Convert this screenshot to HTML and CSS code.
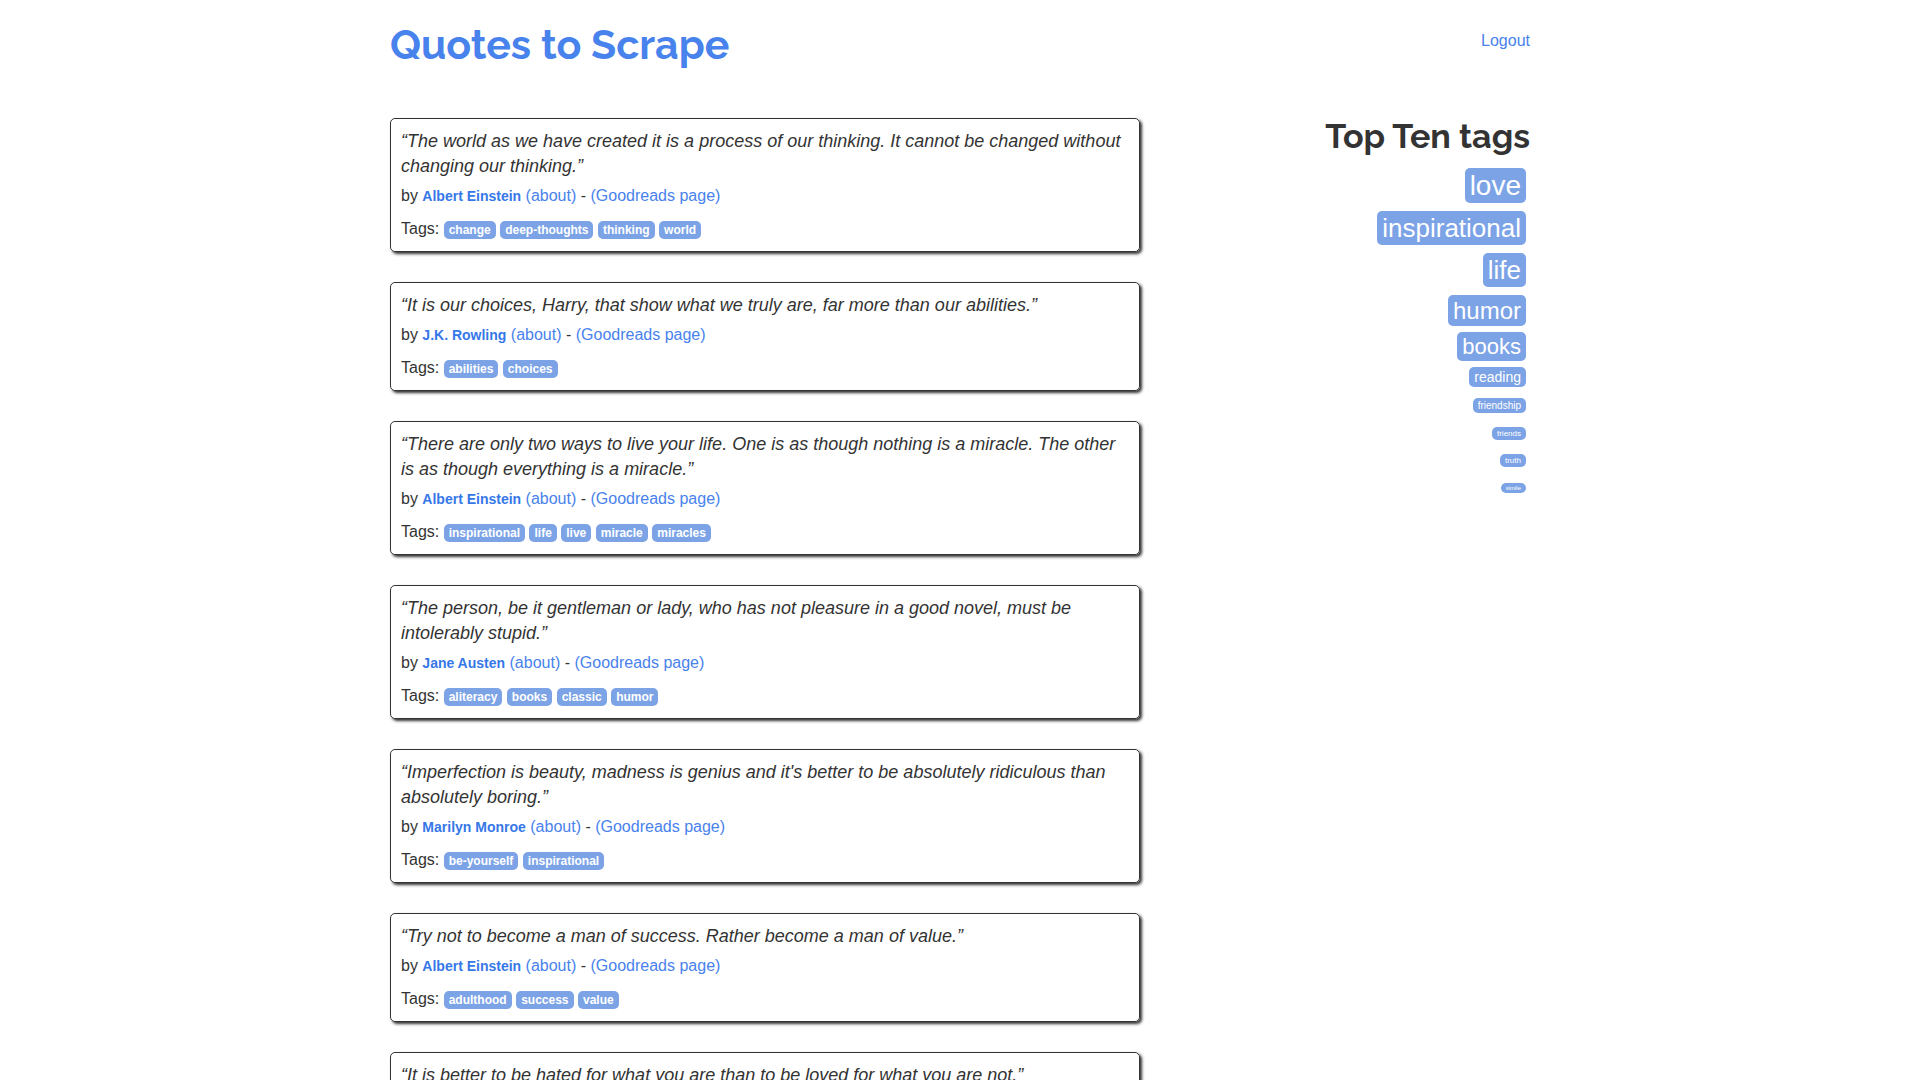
FILE: index.html
```html
<!DOCTYPE html>
<html lang="en">
<head>
<meta charset="utf-8">
<title>Quotes to Scrape</title>
<link rel="stylesheet" href="styles.css">
</head>
<body>
<div class="container">
<header class="header">
<h1><a href="/">Quotes to Scrape</a></h1>
<a class="logout" href="/logout">Logout</a>
</header>
<div class="columns">
<main class="quotes">
<article class="quote">
<p class="text">“The world as we have created it is a process of our thinking. It cannot be changed without changing our thinking.”</p>
<p class="by">by <small class="author">Albert Einstein</small> <a href="/author/Albert-Einstein">(about)</a> - <a href="/goodreads">(Goodreads page)</a></p>
<div class="tags">Tags: <a class="tag" href="/tag/change">change</a> <a class="tag" href="/tag/deep-thoughts">deep-thoughts</a> <a class="tag" href="/tag/thinking">thinking</a> <a class="tag" href="/tag/world">world</a></div>
</article>
<article class="quote">
<p class="text">“It is our choices, Harry, that show what we truly are, far more than our abilities.”</p>
<p class="by">by <small class="author">J.K. Rowling</small> <a href="/author/J-K-Rowling">(about)</a> - <a href="/goodreads">(Goodreads page)</a></p>
<div class="tags">Tags: <a class="tag" href="/tag/abilities">abilities</a> <a class="tag" href="/tag/choices">choices</a></div>
</article>
<article class="quote">
<p class="text">“There are only two ways to live your life. One is as though nothing is a miracle. The other is as though everything is a miracle.”</p>
<p class="by">by <small class="author">Albert Einstein</small> <a href="/author/Albert-Einstein">(about)</a> - <a href="/goodreads">(Goodreads page)</a></p>
<div class="tags">Tags: <a class="tag" href="/tag/inspirational">inspirational</a> <a class="tag" href="/tag/life">life</a> <a class="tag" href="/tag/live">live</a> <a class="tag" href="/tag/miracle">miracle</a> <a class="tag" href="/tag/miracles">miracles</a></div>
</article>
<article class="quote">
<p class="text">“The person, be it gentleman or lady, who has not pleasure in a good novel, must be intolerably stupid.”</p>
<p class="by">by <small class="author">Jane Austen</small> <a href="/author/Jane-Austen">(about)</a> - <a href="/goodreads">(Goodreads page)</a></p>
<div class="tags">Tags: <a class="tag" href="/tag/aliteracy">aliteracy</a> <a class="tag" href="/tag/books">books</a> <a class="tag" href="/tag/classic">classic</a> <a class="tag" href="/tag/humor">humor</a></div>
</article>
<article class="quote">
<p class="text">“Imperfection is beauty, madness is genius and it's better to be absolutely ridiculous than absolutely boring.”</p>
<p class="by">by <small class="author">Marilyn Monroe</small> <a href="/author/Marilyn-Monroe">(about)</a> - <a href="/goodreads">(Goodreads page)</a></p>
<div class="tags">Tags: <a class="tag" href="/tag/be-yourself">be-yourself</a> <a class="tag" href="/tag/inspirational">inspirational</a></div>
</article>
<article class="quote">
<p class="text">“Try not to become a man of success. Rather become a man of value.”</p>
<p class="by">by <small class="author">Albert Einstein</small> <a href="/author/Albert-Einstein">(about)</a> - <a href="/goodreads">(Goodreads page)</a></p>
<div class="tags">Tags: <a class="tag" href="/tag/adulthood">adulthood</a> <a class="tag" href="/tag/success">success</a> <a class="tag" href="/tag/value">value</a></div>
</article>
<article class="quote">
<p class="text">“It is better to be hated for what you are than to be loved for what you are not.”</p>
<p class="by">by <small class="author">André Gide</small> <a href="/author/Andre-Gide">(about)</a> - <a href="/goodreads">(Goodreads page)</a></p>
<div class="tags">Tags: <a class="tag" href="/tag/life">life</a> <a class="tag" href="/tag/love">love</a></div>
</article>
</main>
<aside class="top-tags">
<h2>Top Ten tags</h2>
<span class="tag-item"><a class="tag s28" href="/tag/love">love</a></span>
<span class="tag-item"><a class="tag s26" href="/tag/inspirational">inspirational</a></span>
<span class="tag-item"><a class="tag s26" href="/tag/life">life</a></span>
<span class="tag-item"><a class="tag s24" href="/tag/humor">humor</a></span>
<span class="tag-item"><a class="tag s22" href="/tag/books">books</a></span>
<span class="tag-item"><a class="tag s14" href="/tag/reading">reading</a></span>
<span class="tag-item"><a class="tag s10" href="/tag/friendship">friendship</a></span>
<span class="tag-item"><a class="tag s8" href="/tag/friends">friends</a></span>
<span class="tag-item"><a class="tag s8" href="/tag/truth">truth</a></span>
<span class="tag-item"><a class="tag s6" href="/tag/simile">simile</a></span>
</aside>
</div>
</div>
</body>
</html>
```
FILE: styles.css
```css
* { box-sizing: border-box; }
html { font-size: 16px; }
body {
  margin: 0;
  background: #fff;
  color: #333;
  font: 16px/23px "Liberation Sans", Arial, sans-serif;
}
a { color: #4882ec; text-decoration: none; }
.container { max-width: 1170px; margin: 0 auto; padding: 0 15px; }
.header { display: flex; justify-content: space-between; align-items: flex-start; padding-top: 20px; }
h1, h2 { margin: 0; font-family: Raleway, sans-serif; font-weight: 700; }
h1 { font-size: 41px; line-height: 50px; }
h2 { margin-bottom: 12px; font-size: 34px; line-height: 37px; }
.logout { padding-top: 9px; }
.columns { display: grid; grid-template-columns: 2fr 1fr; gap: 0 15px; padding-top: 48px; }
.quote {
  margin-bottom: 30px;
  padding: 10px 10px 11px;
  border: 1px solid #333;
  border-radius: 5px;
  box-shadow: 2px 2px 3px #333;
}
.text { margin: 0 0 5px; font-size: 18px; line-height: 25px; font-style: italic; }
.by { margin: 0; }
.author { font-size: 14px; line-height: 20px; font-weight: 700; color: #3677e8; }
.tags { margin-top: 10px; }
.tag { padding: 2px 5px; border-radius: 5px; background: #7ca3e6; color: #fff; font-size: 12px; line-height: 17px; font-weight: 700; }
.top-tags { text-align: right; }
.tag-item { display: block; margin: 5px 4px; line-height: 22px; }
.tag-item .tag { font-weight: 400; }
.tag-item .s28 { font-size: 28px; line-height: 38px; }
.tag-item .s26 { font-size: 26px; line-height: 37px; }
.tag-item .s24 { font-size: 24px; line-height: 33px; }
.tag-item .s22 { font-size: 22px; line-height: 29px; }
.tag-item .s14 { font-size: 14px; line-height: 20px; }
.tag-item .s10 { font-size: 10px; line-height: 14px; }
.tag-item .s8 { font-size: 8px; line-height: 11px; }
.tag-item .s6 { font-size: 6px; line-height: 8px; }
```
